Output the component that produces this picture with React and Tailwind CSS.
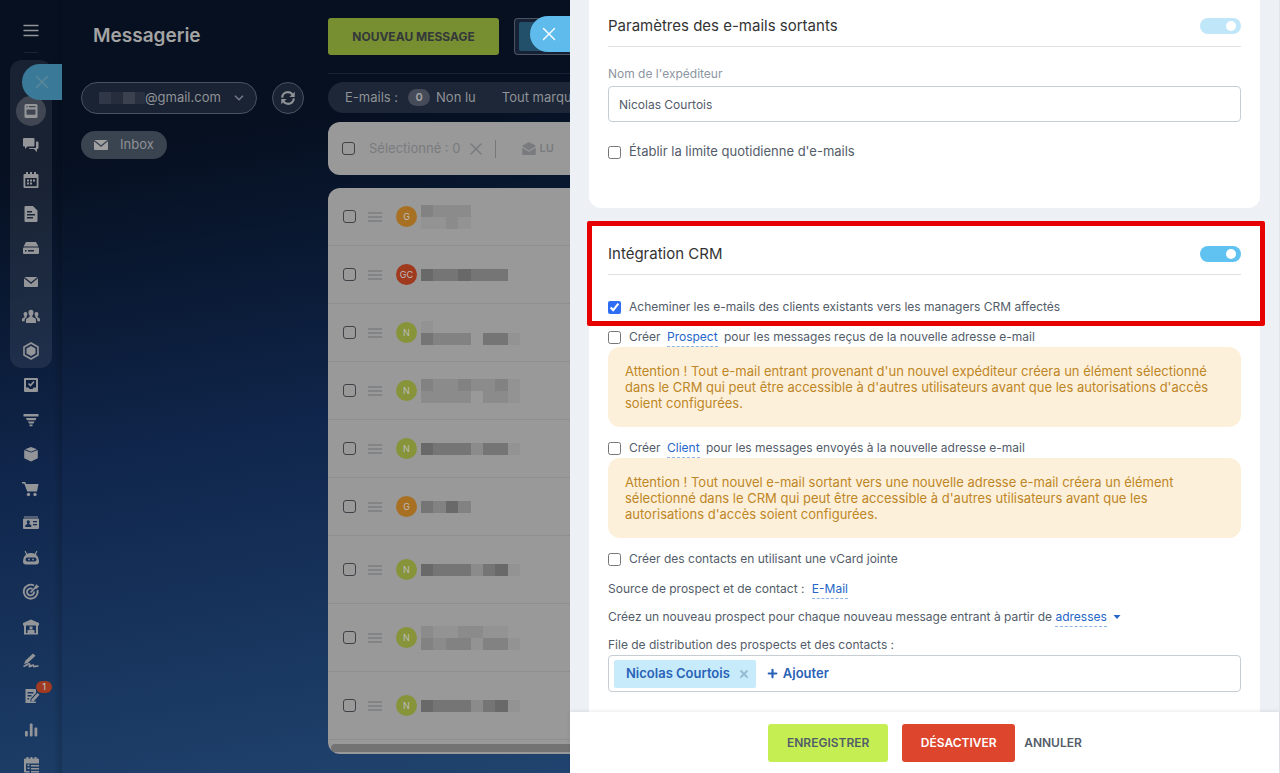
import React from 'react';
import { clsx } from 'clsx';
import { X, ChevronDown, Plus } from 'lucide-react';

const Icon = ({ children, className = "h-5 w-5" }) => (
  <svg viewBox="0 0 20 20" fill="currentColor" aria-hidden="true" className={className}>
    {children}
  </svg>
);

const stroke = { fill: "none", stroke: "currentColor" };

const groupItems = [
  {
    label: "Flux",
    active: true,
    icon: (
      <path fillRule="evenodd" d="M5 3h10a1.500 1.500 0 0 1 1.500 1.500v11a1.500 1.500 0 0 1-1.500 1.500H5a1.500 1.500 0 0 1-1.500-1.500v-11A1.500 1.500 0 0 1 5 3zm.5 2v1.300h1.300V5zm2.500 0v1.300h6.500V5zM5.500 9.200v3.600a1 1 0 0 0 1 1h7a1 1 0 0 0 1-1V9.200a.7.7 0 0 0-.7-.7H6.200a.7.7 0 0 0-.7.7z" />
    ),
  },
  {
    label: "Chat",
    icon: (
      <>
        <path d="M3 3h9.500a1 1 0 0 1 1 1v6.500a1 1 0 0 1-1 1H6.500L4 14v-2.500H3a1 1 0 0 1-1-1V4a1 1 0 0 1 1-1z" />
        <path d="M15 6.500h1.500a1 1 0 0 1 1 1V13a1 1 0 0 1-1 1H16v3l-3-3H9a1 1 0 0 1-1-1h6a1 1 0 0 0 1-1z" />
      </>
    ),
  },
  {
    label: "Calendrier",
    icon: (
      <>
        <path fillRule="evenodd" d="M3.500 4h13a1 1 0 0 1 1 1v12a1 1 0 0 1-1 1h-13a1 1 0 0 1-1-1V5a1 1 0 0 1 1-1zM4.300 8v8.200h11.400V8z" />
        <path d="M5 2h2v3H5zM9 2h2v3H9zM13 2h2v3h-2zM6 9.500h2v2H6zM9 9.500h2v2H9zM12 9.500h2v2h-2zM6 12.500h2v2H6zM9 12.500h2v2H9z" />
      </>
    ),
  },
  {
    label: "Documents",
    icon: (
      <path fillRule="evenodd" d="M4.500 2h7.500l4.500 4.500V17a1 1 0 0 1-1 1h-11a1 1 0 0 1-1-1V3a1 1 0 0 1 1-1zM6 7v1.500h5V7zm0 3v1.500h8V10zm0 3v1.500h6V13z" />
    ),
  },
  {
    label: "Drive",
    icon: (
      <path fillRule="evenodd" d="M5 4h10l2.500 4.500h-15zM3 9.500h14a1 1 0 0 1 1 1V15a1 1 0 0 1-1 1H3a1 1 0 0 1-1-1v-4.500a1 1 0 0 1 1-1zM4 12v1.500h1.500V12zm3 0v1.500h6V12z" />
    ),
  },
  {
    label: "Messagerie",
    icon: <path d="M3.500 5h13L10 10.300zM3 6.200l7 5.700 7-5.700V14a1 1 0 0 1-1 1H4a1 1 0 0 1-1-1z" />,
  },
  {
    label: "Groupes",
    icon: (
      <>
        <path d="M10 2.800c1.700 0 2.600 1.200 2.500 3-.1 1.300-.6 2.200-1.100 2.700v1.500l3 1.500c.5.300.6 1 .6 4.500H5c0-3.500.1-4.200.6-4.500l3-1.500V8.500c-.5-.5-1-1.400-1.100-2.700-.1-1.800.8-3 2.500-3z" />
        <path d="M4.500 5c1.300 0 2 .9 1.900 2.200-.1 1-.4 1.600-.8 2v1l-1.200 1c-.7.600-.8 1.800-.8 3H1c0-2.300.1-2.700.6-3l1.800-.9V9.200c-.4-.4-.7-1-.8-2C2.500 5.900 3.200 5 4.500 5zM15.500 5c-1.300 0-2 .9-1.900 2.200.1 1 .4 1.600.8 2v1l1.200 1c.7.600.8 1.800.8 3H19c0-2.300-.1-2.700-.6-3l-1.800-.9V9.200c.4-.4.7-1 .8-2C17.500 5.900 16.800 5 15.500 5z" />
      </>
    ),
  },
  {
    label: "Tâches",
    icon: (
      <>
        <path d="M10 2l7 4v8l-7 4-7-4V6z" {...stroke} strokeWidth="1.600" strokeLinejoin="round" />
        <path d="M10 5l4.500 2.500v5L10 15l-4.500-2.500v-5z" />
      </>
    ),
  },
];

const menuItems = [
  {
    label: "CRM",
    icon: (
      <>
        <path fillRule="evenodd" d="M4 3h12a1 1 0 0 1 1 1v12a1 1 0 0 1-1 1H4a1 1 0 0 1-1-1V4a1 1 0 0 1 1-1zm1 2v7.500h2.500L8.500 14h3l1-1.500H15V5z" />
        <path d="M7.500 8.500l2 2 3.500-4" {...stroke} strokeWidth="1.700" />
      </>
    ),
  },
  {
    label: "Entonnoir",
    icon: <path d="M2.500 4h15v2.500h-15zM5 8h10.500l-1 2.300H6zM7 11.500h6.500l-1 2H8zM8.500 14.500h3v1.800h-3z" />,
  },
  {
    label: "Stock",
    icon: <path d="M10 3l6 2.200-6 2.500-6-2.500zM3.200 6L10 8.500 16.800 6v8.200L10 17.500l-6.800-3.300z" />,
  },
  {
    label: "Boutique",
    icon: (
      <>
        <path d="M1 3h3.300l.7 2h12.500l-1.500 7.500H6.200L3.200 4.500H1z" />
        <circle cx="7.500" cy="15.500" r="1.700" />
        <circle cx="14" cy="15.500" r="1.700" />
      </>
    ),
  },
  {
    label: "Contacts",
    icon: (
      <path fillRule="evenodd" d="M3 3.500h14v1H3zM3 5.500h14a1 1 0 0 1 1 1V15a1 1 0 0 1-1 1H3a1 1 0 0 1-1-1V6.500a1 1 0 0 1 1-1zM7.300 7.200c-1.300 0-1.700 1-1.500 2 .1.600.4 1 .6 1.200v.7L4.300 12.200V14h6v-1.800l-2.100-1.100v-.7c.3-.2.5-.6.600-1.200.2-1-.2-2-1.500-2zM12 8v1.300h4V8zm0 3v1.300h4V11z" />
    ),
  },
  {
    label: "Automatisation",
    icon: (
      <path fillRule="evenodd" d="M4.500 2.800l1.700 3A8 8 0 0 1 10 5a8 8 0 0 1 3.800.8l1.700-3 .9.500-1.500 3.300c1.800 1.300 2.900 3.700 3.100 6.900a3 3 0 0 1-3 3H5a3 3 0 0 1-3-3c.2-3.200 1.300-5.600 3.100-6.900L3.600 3.300zM6.500 9.500a2 2 0 0 0 0 4h7a2 2 0 0 0 0-4zm.7 1.200h1.600v1.600H7.200zm4 0h1.600v1.600h-1.600z" />
    ),
  },
  {
    label: "Objectifs",
    icon: (
      <>
        <path d="M13 3.500A7 7 0 1 0 16.500 8M11.500 7A3.500 3.500 0 1 0 13 9.500" {...stroke} strokeWidth="1.900" />
        <path d="M9.500 10.500L15 5" {...stroke} strokeWidth="1.700" />
        <path d="M13.500 4.500L16 2l.5 1.800 1.800.5-2.500 2.500h-2.300z" />
      </>
    ),
  },
  {
    label: "Entrepôt",
    icon: (
      <>
        <path fillRule="evenodd" d="M10 2.500L18 6v2.500h-1V17.500H3V8.500H2V6zM5 8.500v7.500h10V8.500z" />
        <path d="M8.500 9.500h3v3h-3zM6.500 13h7v3.500h-7z" />
      </>
    ),
  },
  {
    label: "Signature",
    icon: (
      <>
        <path d="M3 13l1.500-3.500 7.500-7 2.500 2.300-7.800 7.200z" />
        <path d="M2.500 15.500c3-1 5-3.500 6-2.500s-1.500 3 .5 2.500 2-1.500 3-1.500 0 1.800 1.500 1.500 2-.5 4-.5" {...stroke} strokeWidth="1.700" />
      </>
    ),
  },
  {
    label: "Formulaires",
    badge: 1,
    icon: (
      <>
        <path fillRule="evenodd" d="M4.500 3H14a1 1 0 0 1 1 1v3l-5.500 6v2.500H15V16a1 1 0 0 1-1 1H4.500zM6.500 6v1.500h6V6zm0 3v1.500h4V9zm0 3v1.500H8V12z" />
        <path d="M10.500 15.500v-2L16.500 7l2 1.800-6 6.700z" />
      </>
    ),
  },
  {
    label: "Rapports",
    icon: (
      <>
        <rect x="4" y="11" width="2.800" height="5.500" rx="1" />
        <rect x="8.800" y="3.500" width="2.800" height="13" rx="1" />
        <rect x="13.500" y="7.500" width="2.800" height="9" rx="1" />
      </>
    ),
  },
  {
    label: "Planning",
    icon: (
      <>
        <path fillRule="evenodd" d="M4 3.500h13a1 1 0 0 1 1 1v4H5v7.500H8.500V17.500H4a1 1 0 0 1-1-1v-12a1 1 0 0 1 1-1z" />
        <path d="M5.500 2h2v3h-2zM9.500 2h2v3h-2zM13.500 2h2v3h-2zM6.500 9.500h2v1.600h-2zM6.500 12.500h2v1.600h-2zM10 10h8v1.500h-8zM10 13h8v1.500h-8zM10 16h8v1.500h-8z" />
      </>
    ),
  },
];

const shades = [
  "bg-transparent",
  "bg-[#939393]",
  "bg-[#8b8b8b]",
  "bg-[#828282]",
  "bg-[#757575]",
  "bg-[#696969]",
  "bg-[#5c5c5c]",
];

const avatarColors = {
  G: "bg-[#a87023]",
  GC: "bg-[#9f3a1f]",
  N: "bg-[#87943a]",
};

// Hidden subjects, one digit per block (index in shades)
const messages = [
  { id: 1, initials: "G", mask: ["32220000", "11210000"] },
  { id: 2, initials: "GC", mask: ["54454440"] },
  { id: 3, initials: "N", mask: ["10000000", "43330441"] },
  { id: 4, initials: "N", mask: ["32232231", "22220221"] },
  { id: 5, initials: "N", mask: ["54442441"] },
  { id: 6, initials: "G", mask: ["43530000"] },
  { id: 7, initials: "N", mask: ["54442451"], tall: true },
  { id: 8, initials: "N", mask: ["21122110", "32331331"], tall: true },
  { id: 9, initials: "N", mask: ["54442451"], tall: true },
];

const Sidebar = () => {
  const renderItem = (item) => (
    <li key={item.label} className="flex items-center justify-center">
      <a
        href="#"
        aria-label={item.label}
        className={clsx(
          "relative flex h-[30px] w-[30px] items-center justify-center rounded-full",
          item.active && "bg-[#414752]"
        )}
      >
        <Icon>{item.icon}</Icon>
        {item.badge && (
          <span className="absolute top-0 left-5 flex h-3 w-4 items-center justify-center rounded-full bg-[#a03a20] text-[9px] font-medium text-[#b9b9b9]">
            {item.badge}
          </span>
        )}
      </a>
    </li>
  );

  return (
    <nav className="relative flex w-[62px] shrink-0 flex-col items-center bg-linear-to-r from-transparent from-85% to-black/15 text-[#939599]">
      <button type="button" aria-label="Menu" className="mt-5 h-5 w-5">
        <Icon>
          <path d="M2.500 5.500h15M2.500 10.500h15M2.500 15.500h15" {...stroke} strokeWidth="1.400" />
        </Icon>
      </button>
      <div className="mt-3 mb-[7px] w-[14px] border-t border-white/8" />
      <div className="flex h-[308px] w-[42px] shrink-0 flex-col rounded-xl bg-white/8 pt-[34px]">
        <ul className="grid flex-1 auto-rows-fr">{groupItems.map(renderItem)}</ul>
      </div>
      <ul className="grid h-[414px] shrink-0 auto-rows-fr">{menuItems.map(renderItem)}</ul>
      <button
        type="button"
        aria-label="Fermer le menu"
        className="absolute top-16 right-0 flex h-9 w-10 items-center justify-center rounded-l-full bg-[#3a7a98] text-[#5d8798]"
      >
        <X className="h-[22px] w-[22px]" strokeWidth={1.500} />
      </button>
    </nav>
  );
};

const ListCheckbox = ({ label }) => (
  <input
    type="checkbox"
    aria-label={label}
    className="h-[13px] w-[13px] shrink-0 appearance-none rounded-[3px] border border-[#3f4246]"
  />
);

const MessageRow = ({ message }) => (
  <li
    className={clsx(
      "flex items-center border-b border-[#8f8f8f] pl-[15px]",
      message.tall ? "h-[68px]" : "h-[58px]"
    )}
  >
    <ListCheckbox label={`Sélectionner le message ${message.id}`} />
    <svg viewBox="0 0 14 10" className="ml-3 h-[10px] w-[14px] shrink-0" aria-hidden="true">
      <path d="M0 1h14M0 5h14M0 9h14" stroke="#7b7d80" strokeWidth="1.500" />
    </svg>
    <span
      className={clsx(
        "ml-[14px] flex h-[21px] w-[21px] shrink-0 items-center justify-center rounded-full text-[9px] text-[#bdbdbd]",
        avatarColors[message.initials]
      )}
    >
      {message.initials}
    </span>
    <div className="ml-1 w-[99px] shrink-0">
      {message.mask.map((line, i) => (
        <div key={i} className="grid h-3 grid-cols-8">
          {line.split("").map((shade, j) => (
            <span key={j} className={shades[shade]} />
          ))}
        </div>
      ))}
    </div>
  </li>
);

const Mailbox = () => (
  <div className="flex min-w-0 flex-1 text-[13px] text-[#8f9296]">
    <div className="w-[266px] shrink-0 pl-[19px]">
      <h1 className="mt-[22px] pl-3 text-[19px] leading-7 font-semibold text-[#a3a3a3]">Messagerie</h1>
      <div className="mt-8 flex items-center">
        <button
          type="button"
          className="flex h-8 w-[176px] items-center rounded-full border border-[#4b525f] bg-[#1a2334] pr-[10px] pl-[17px]"
        >
          <span className="flex h-3 w-[46px] shrink-0">
            <span className="w-3 bg-[#303746]" />
            <span className="w-3 bg-[#262e3d]" />
            <span className="w-3 bg-[#3b414e]" />
            <span className="w-[10px] bg-[#293140]" />
          </span>
          @gmail.com
          <ChevronDown className="ml-auto h-[14px] w-[14px] text-[#6f7580]" strokeWidth={3} />
        </button>
        <button
          type="button"
          aria-label="Actualiser"
          className="ml-[15px] flex h-8 w-8 items-center justify-center rounded-full border border-[#4b525f] bg-[#1a2334]"
        >
          <Icon className="h-[18px] w-[18px]">
            <path d="M3.500 9.500c.3-3.600 3-6 6.500-6 2.300 0 4 1 5.200 2.700M16.500 10.500c-.3 3.600-3 6-6.500 6-2.300 0-4-1-5.200-2.700" {...stroke} strokeWidth="2.400" />
            <path d="M17.500 3v6h-6zM2.500 17v-6h6z" />
          </Icon>
        </button>
      </div>
      <a href="#" className="mt-[17px] flex h-7 w-[86px] items-center rounded-full bg-[#3a4350] pl-[10px]">
        <Icon>
          <path d="M3.500 5h13L10 10.300zM3 6.200l7 5.700 7-5.700V14a1 1 0 0 1-1 1H4a1 1 0 0 1-1-1z" fill="#a0a0a0" />
        </Icon>
        <span className="ml-[9px]">Inbox</span>
      </a>
    </div>

    <main className="flex min-w-0 flex-1 flex-col overflow-hidden">
      <div className="mt-[18px] flex shrink-0 border-b border-white/8 pb-[18px]">
        <button type="button" className="h-[37px] w-[171px] shrink-0 rounded-[3px] bg-[#788f31] text-[12px] font-bold text-[#33383a]">
          NOUVEAU MESSAGE
        </button>
        <div className="ml-[15px] h-[37px] flex-1 rounded-l border border-r-0 border-[#4b5361] bg-[#182236] py-[3px] pl-1">
          <div className="h-full rounded-xs bg-[#22506a]" />
        </div>
      </div>

      <div className="mt-2 flex h-[31px] shrink-0 items-center rounded-l-full bg-[#1d2738] pl-[17px] whitespace-nowrap">
        <span>E-mails :</span>
        <span className="mr-1.5 ml-[10px] flex h-[17px] w-[22px] shrink-0 items-center justify-center rounded-full bg-[#454b58] text-[11px] font-semibold text-[#a3a3a3]">
          0
        </span>
        <span>Non lu</span>
        <a href="#" className="ml-[26px]">Tout marquer comme lu</a>
      </div>

      <div className="mt-[9px] flex h-[53px] shrink-0 items-center rounded-l-xl bg-[#999] pl-[14px] text-[#797b7e]">
        <ListCheckbox label="Tout sélectionner" />
        <span className="ml-[14px] whitespace-nowrap">Sélectionné : 0</span>
        <button type="button" aria-label="Annuler la sélection" className="ml-1.5">
          <X className="h-5 w-5" strokeWidth={1.800} />
        </button>
        <span className="ml-[9px] h-[18px] border-l border-[#777]" />
        <button type="button" className="ml-[23px] flex items-center text-[11px] font-semibold">
          <Icon>
            <path d="M10 3l6.500 3.500v1L10 11.500 3.500 7.500v-1zM3.200 8.700l6.800 4.100 6.800-4.100V15a1 1 0 0 1-1 1H4.200a1 1 0 0 1-1-1z" />
          </Icon>
          LU
        </button>
      </div>

      <div className="mt-[13px] shrink-0 overflow-hidden rounded-l-xl bg-[#999]">
        <ul>
          {messages.map((message) => (
            <MessageRow key={message.id} message={message} />
          ))}
        </ul>
        <div className="pt-1 pb-0.5 pl-[3px]">
          <div className="h-2 rounded-l-full bg-[#737373]" />
        </div>
      </div>
    </main>
  </div>
);

const Section = ({ title, id, disabled, children }) => (
  <>
    <div className="flex items-center justify-between border-b border-[#dfe0e3] pb-[10px]">
      <h2 id={id} className="text-[15px] leading-5 text-[#333]">{title}</h2>
      <input
        type="checkbox"
        role="switch"
        defaultChecked
        disabled={disabled}
        aria-labelledby={id}
        className="relative h-4 w-[41px] appearance-none rounded-full bg-[#60c2f1] before:absolute before:top-[3px] before:right-[5px] before:h-[10px] before:w-[10px] before:rounded-full before:bg-white disabled:bg-[#c0e7f9]"
      />
    </div>
    {children}
  </>
);

const Checkbox = ({ id, checked, className, children }) => (
  <div className={clsx("flex h-5 items-center gap-2", className)}>
    <input id={id} type="checkbox" defaultChecked={checked} className="h-[13px] w-[13px] shrink-0 accent-[#2f6ef2]" />
    <label htmlFor={id}>{children}</label>
  </div>
);

const DashedLink = ({ children, className }) => (
  <a href="#" className={clsx("border-b border-dashed border-[#8fb6ea] pb-0.5 text-[#2566c8]", className)}>
    {children}
  </a>
);

const Warning = ({ children }) => (
  <p className="rounded-xl bg-[#fdf0da] px-[17px] py-4 text-[13px] leading-4 text-[#bd8626]">{children}</p>
);

const SettingsPanel = () => (
  <form className="flex min-w-0 flex-1 flex-col border-r border-[#e2e6ea] bg-[#edf1f5] text-[12px] text-[#535c69]">
    <div className="min-h-0 flex-1 overflow-hidden px-[19px]">
      <section className="h-[208px] rounded-b-xl bg-white px-[19px] pt-4">
        <Section title="Paramètres des e-mails sortants" id="outgoing" disabled>
          <label htmlFor="sender" className="mt-[19px] block leading-4 text-[#8d95a1]">Nom de l'expéditeur</label>
          <input
            id="sender"
            type="text"
            defaultValue="Nicolas Courtois"
            className="mt-1 mb-5 block h-9 w-full rounded border border-[#c6cdd3] px-[10px]"
          />
          <Checkbox id="limit" className="text-[13px]">Établir la limite quotidienne d'e-mails</Checkbox>
        </Section>
      </section>

      <section className="mt-[14px] bg-white px-[19px] pb-5">
        <div className="relative pt-[22px]">
          <Section title="Intégration CRM" id="crm">
            <Checkbox id="route" checked className="mt-[22px]">
              Acheminer les e-mails des clients existants vers les managers CRM affectés
            </Checkbox>
          </Section>
          <div className="pointer-events-none absolute -top-px -right-6 -bottom-[9px] -left-[21px] rounded-xs border-5 border-[#e60000]" />
        </div>

        <Checkbox id="lead" className="mt-[10px]">
          Créer <DashedLink className="mx-[3px]">Prospect</DashedLink> pour les messages reçus de la nouvelle adresse e-mail
        </Checkbox>
        <Warning>
          Attention ! Tout e-mail entrant provenant d'un nouvel expéditeur créera un élément sélectionné dans le CRM qui
          peut être accessible à d'autres utilisateurs avant que les autorisations d'accès soient configurées.
        </Warning>

        <Checkbox id="client" className="mt-[11px]">
          Créer <DashedLink className="mx-[3px]">Client</DashedLink> pour les messages envoyés à la nouvelle adresse e-mail
        </Checkbox>
        <Warning>
          Attention ! Tout nouvel e-mail sortant vers une nouvelle adresse e-mail créera un élément sélectionné dans le
          CRM qui peut être accessible à d'autres utilisateurs avant que les autorisations d'accès soient configurées.
        </Warning>

        <Checkbox id="vcard" className="mt-[11px]">Créer des contacts en utilisant une vCard jointe</Checkbox>
        <p className="mt-[10px] leading-5">
          Source de prospect et de contact : <DashedLink className="ml-1">E-Mail</DashedLink>
        </p>
        <p className="mt-2 flex items-center leading-5">
          <span>
            Créez un nouveau prospect pour chaque nouveau message entrant à partir de <DashedLink>adresses</DashedLink>
          </span>
          <svg viewBox="0 0 8 4" className="ml-1.5 h-1 w-2" aria-hidden="true">
            <path d="M0.500 0h7L4 4z" fill="#2566c8" />
          </svg>
        </p>
        <p className="mt-2 leading-5">File de distribution des prospects et des contacts :</p>
        <div className="flex h-[37px] items-center rounded border border-[#c6cdd3] px-[5px] text-[13px] font-semibold text-[#2a62b8]">
          <span className="flex h-7 items-center rounded-xs bg-[#c7ebfa] pr-1.5 pl-3">
            Nicolas Courtois
            <button type="button" aria-label="Retirer Nicolas Courtois" className="ml-2 text-[#96bdd4]">
              <X className="h-3 w-3" strokeWidth={4} />
            </button>
          </span>
          <button type="button" className="ml-[10px] flex items-center gap-1">
            <Plus className="h-[13px] w-[13px]" strokeWidth={4} />
            Ajouter
          </button>
        </div>
      </section>
    </div>

    <footer className="z-10 flex h-[61px] shrink-0 items-center justify-center bg-white pl-px text-[12px] font-semibold shadow-[0_-1px_4px_rgba(0,0,0,0.08)]">
      <button type="button" className="h-[38px] w-[120px] rounded-[3px] bg-[#c4ee52]">ENREGISTRER</button>
      <button type="button" className="ml-[14px] h-[38px] w-[113px] rounded-[3px] bg-[#dd452d] text-white">DÉSACTIVER</button>
      <button type="button" className="ml-[9px]">ANNULER</button>
    </footer>
  </form>
);

const App = () => (
  <div className="relative flex h-screen overflow-hidden bg-white font-['Inter',sans-serif]">
    <div className="relative flex w-[570px] shrink-0 overflow-hidden bg-linear-170 from-[#061021] from-20% via-[#10264c] via-55% to-[#20446f]">
      <Sidebar />
      <Mailbox />
      <button
        type="button"
        aria-label="Fermer"
        className="absolute top-4 right-0 flex h-9 w-10 items-center justify-center rounded-l-full bg-[#5ebbec] pr-0.5 text-white"
      >
        <X className="h-[22px] w-[22px]" strokeWidth={1.500} />
      </button>
    </div>
    <SettingsPanel />
  </div>
);

export default App;
